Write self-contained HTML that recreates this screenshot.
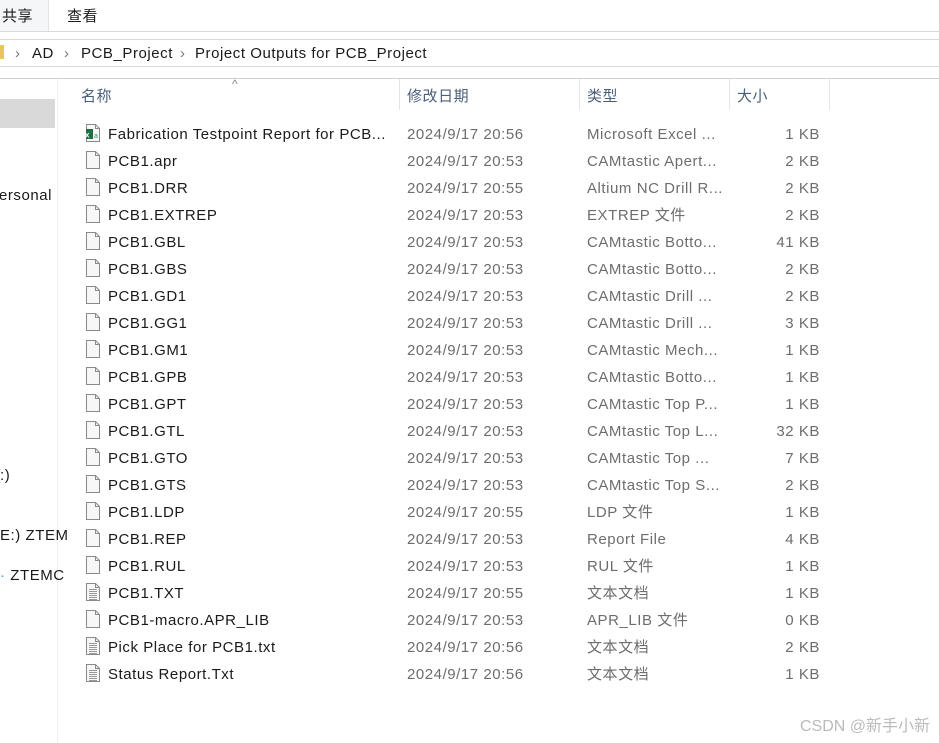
<!DOCTYPE html>
<html><head><meta charset="utf-8"><style>
body{margin:0;width:939px;height:743px;background:#fff;position:relative;overflow:hidden;font-family:"Liberation Sans","Noto Sans CJK SC",sans-serif;font-size:15px;color:#1a1a1a;letter-spacing:0.55px}
.a{position:absolute;white-space:nowrap;line-height:20px;height:20px}
.h{position:absolute;height:1px;left:0;width:939px}
.g{color:#6d6d6d}
.ic{position:absolute;left:86px;width:14px;height:18px}
</style></head><body>
<div class="a" style="left:0;top:0;width:48px;height:31px;background:#f5f6f7;border-right:1px solid #e3e3e3"></div>
<div class="a" style="left:2px;top:7px">共享</div>
<div class="a" style="left:67px;top:7px">查看</div>
<div class="h" style="top:31px;background:#dadada"></div>
<div class="h" style="top:39px;background:#d9d9d9"></div>
<div class="h" style="top:66px;background:#d9d9d9"></div>
<div class="h" style="top:78px;background:#cfcfcf"></div>
<div class="a" style="left:0;top:45px;width:4px;height:14px;background:#e8c65a"></div>
<div class="a" style="left:15px;top:44px;color:#777">›</div>
<div class="a" style="left:32px;top:44px">AD</div>
<div class="a" style="left:64px;top:44px;color:#777">›</div>
<div class="a" style="left:81px;top:44px">PCB_Project</div>
<div class="a" style="left:180px;top:44px;color:#777">›</div>
<div class="a" style="left:195px;top:44px">Project Outputs for PCB_Project</div>
<div class="a" style="left:57px;top:79px;width:1px;height:664px;background:#f0f0f0"></div>
<div class="a" style="left:0;top:99px;width:55px;height:29px;background:#d9d9d9"></div>
<div class="a" style="left:-1px;top:186px">ersonal</div>
<div class="a" style="left:0;top:466px">:)</div>
<div class="a" style="left:0;top:526px">E:) ZTEM</div>
<div class="a" style="left:0;top:566px"><span style="color:#3aa0e0">·</span> ZTEMC</div>
<div class="a" style="left:232px;top:74px;color:#888;font-size:12px">^</div>
<div class="a" style="left:81px;top:87px;color:#4c607a">名称</div>
<div class="a" style="left:407px;top:87px;color:#4c607a">修改日期</div>
<div class="a" style="left:587px;top:87px;color:#4c607a">类型</div>
<div class="a" style="left:737px;top:87px;color:#4c607a">大小</div>
<div class="a" style="left:399px;top:79px;width:1px;height:31px;background:#e5e5e5"></div>
<div class="a" style="left:579px;top:79px;width:1px;height:31px;background:#e5e5e5"></div>
<div class="a" style="left:729px;top:79px;width:1px;height:31px;background:#e5e5e5"></div>
<div class="a" style="left:829px;top:79px;width:1px;height:31px;background:#e5e5e5"></div>
<div id="rows"></div>
<div class="a" style="left:800px;top:717px;color:#bbb;font-size:16px;letter-spacing:0">CSDN @新手小新</div>
<script>
var r=[["x","Fabrication Testpoint Report for PCB...","2024/9/17 20:56","Microsoft Excel ...","1 KB"],
["f","PCB1.apr","2024/9/17 20:53","CAMtastic Apert...","2 KB"],
["f","PCB1.DRR","2024/9/17 20:55","Altium NC Drill R...","2 KB"],
["f","PCB1.EXTREP","2024/9/17 20:53","EXTREP 文件","2 KB"],
["f","PCB1.GBL","2024/9/17 20:53","CAMtastic Botto...","41 KB"],
["f","PCB1.GBS","2024/9/17 20:53","CAMtastic Botto...","2 KB"],
["f","PCB1.GD1","2024/9/17 20:53","CAMtastic Drill ...","2 KB"],
["f","PCB1.GG1","2024/9/17 20:53","CAMtastic Drill ...","3 KB"],
["f","PCB1.GM1","2024/9/17 20:53","CAMtastic Mech...","1 KB"],
["f","PCB1.GPB","2024/9/17 20:53","CAMtastic Botto...","1 KB"],
["f","PCB1.GPT","2024/9/17 20:53","CAMtastic Top P...","1 KB"],
["f","PCB1.GTL","2024/9/17 20:53","CAMtastic Top L...","32 KB"],
["f","PCB1.GTO","2024/9/17 20:53","CAMtastic Top ...","7 KB"],
["f","PCB1.GTS","2024/9/17 20:53","CAMtastic Top S...","2 KB"],
["f","PCB1.LDP","2024/9/17 20:55","LDP 文件","1 KB"],
["f","PCB1.REP","2024/9/17 20:53","Report File","4 KB"],
["f","PCB1.RUL","2024/9/17 20:53","RUL 文件","1 KB"],
["t","PCB1.TXT","2024/9/17 20:55","文本文档","1 KB"],
["f","PCB1-macro.APR_LIB","2024/9/17 20:53","APR_LIB 文件","0 KB"],
["t","Pick Place for PCB1.txt","2024/9/17 20:56","文本文档","2 KB"],
["t","Status Report.Txt","2024/9/17 20:56","文本文档","1 KB"]];
var h="";
r.forEach(function(e,i){var y=125+i*27;
var ic='<svg class="ic" style="top:'+(y-1)+'px" viewBox="0 0 14 18"><path d="M0.5 0.5H9.5L13.5 4.5V17.5H0.5Z" fill="#f7f7f7" stroke="#8a8a8a"/><path d="M9.5 0.5V4.5H13.5" fill="none" stroke="#8a8a8a"/>';
if(e[0]=="t"){for(var k=0;k<6;k++)ic+='<path d="M3 '+(6+k*2)+'.5H11" stroke="#999"/>';}
if(e[0]=="x"){ic+='<rect x="-3" y="5" width="10" height="10" fill="#1d7044"/><text x="-1" y="13.5" font-size="8" fill="#fff" font-family="Liberation Sans" font-weight="bold">x</text><text x="8" y="14" font-size="7" fill="#2a9a5a" font-family="Liberation Sans">a</text>';}
ic+='</svg>';
h+=ic+'<div class="a" style="left:108px;top:'+y+'px">'+e[1]+'</div><div class="a g" style="left:407px;top:'+y+'px">'+e[2]+'</div><div class="a g" style="left:587px;top:'+y+'px">'+e[3]+'</div><div class="a g" style="right:119px;top:'+y+'px">'+e[4]+'</div>';});
document.getElementById("rows").innerHTML=h;
</script>
</body></html>
